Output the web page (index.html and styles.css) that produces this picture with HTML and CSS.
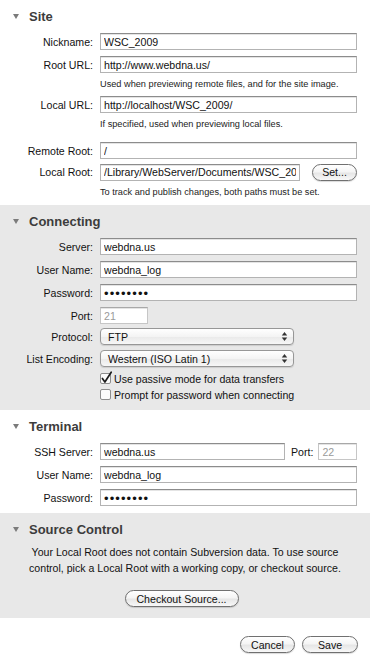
FILE: index.html
```html
<!DOCTYPE html>
<html lang="en">
<head>
    <meta charset="UTF-8">
    <meta name="viewport" content="width=device-width, initial-scale=1.0">
    <title>Site Settings</title>
    <link rel="stylesheet" href="styles.css">
</head>
<body>
    <div class="panel">
        <!-- Site -->
        <section class="group">
            <h2 class="group-title"><span class="disclosure"></span>Site</h2>
            <div class="row">
                <label for="nickname">Nickname:</label>
                <input type="text" class="field" id="nickname" value="WSC_2009">
            </div>
            <div class="row">
                <label for="rootUrl">Root URL:</label>
                <input type="text" class="field" id="rootUrl" value="http://www.webdna.us/">
            </div>
            <p class="hint">Used when previewing remote files, and for the site image.</p>
            <div class="row">
                <label for="localUrl">Local URL:</label>
                <input type="text" class="field" id="localUrl" value="http://localhost/WSC_2009/">
            </div>
            <p class="hint">If specified, used when previewing local files.</p>
            <div class="row spaced">
                <label for="remoteRoot">Remote Root:</label>
                <input type="text" class="field" id="remoteRoot" value="/">
            </div>
            <div class="row tight">
                <label for="localRoot">Local Root:</label>
                <input type="text" class="field local-root" id="localRoot" value="/Library/WebServer/Documents/WSC_2009/">
                <button type="button" class="btn set-btn">Set...</button>
            </div>
            <p class="hint">To track and publish changes, both paths must be set.</p>
        </section>

        <!-- Connecting -->
        <section class="group shaded">
            <h2 class="group-title"><span class="disclosure"></span>Connecting</h2>
            <div class="row">
                <label for="server">Server:</label>
                <input type="text" class="field" id="server" value="webdna.us">
            </div>
            <div class="row">
                <label for="userName">User Name:</label>
                <input type="text" class="field" id="userName" value="webdna_log">
            </div>
            <div class="row">
                <label for="password">Password:</label>
                <input type="text" class="field secret" id="password" value="••••••••">
            </div>
            <div class="row">
                <label for="port">Port:</label>
                <input type="text" class="field port" id="port" placeholder="21">
            </div>
            <div class="row popup-row">
                <label>Protocol:</label>
                <div class="popup">
                    <span>FTP</span>
                    <svg class="arrows" width="7" height="11" viewBox="0 0 7 11"><polygon points="3.5,1 6.2,4.4 0.8,4.4"/><polygon points="0.8,6.6 6.2,6.6 3.5,10"/></svg>
                </div>
            </div>
            <div class="row popup-row">
                <label>List Encoding:</label>
                <div class="popup">
                    <span>Western (ISO Latin 1)</span>
                    <svg class="arrows" width="7" height="11" viewBox="0 0 7 11"><polygon points="3.5,1 6.2,4.4 0.8,4.4"/><polygon points="0.8,6.6 6.2,6.6 3.5,10"/></svg>
                </div>
            </div>
            <div class="checks">
                <div class="check-row">
                    <svg class="checkbox" width="13" height="14" viewBox="0 0 13 14"><rect x="0.5" y="2.5" width="10" height="10" rx="1.5" fill="#fbfbfb" stroke="#8d8d8d"/><path d="M2.4 7.4 L4.9 11 L11.2 1.2" fill="none" stroke="#1c1c1c" stroke-width="1.7" stroke-linecap="round" stroke-linejoin="round"/></svg>
                    <span>Use passive mode for data transfers</span>
                </div>
                <div class="check-row">
                    <svg class="checkbox" width="13" height="14" viewBox="0 0 13 14"><rect x="0.5" y="2.5" width="10" height="10" rx="1.5" fill="#fbfbfb" stroke="#8d8d8d"/></svg>
                    <span>Prompt for password when connecting</span>
                </div>
            </div>
        </section>

        <!-- Terminal -->
        <section class="group">
            <h2 class="group-title"><span class="disclosure"></span>Terminal</h2>
            <div class="row">
                <label for="sshServer">SSH Server:</label>
                <input type="text" class="field ssh" id="sshServer" value="webdna.us">
                <span class="inline-label">Port:</span>
                <input type="text" class="field ssh-port" placeholder="22">
            </div>
            <div class="row">
                <label for="sshUser">User Name:</label>
                <input type="text" class="field" id="sshUser" value="webdna_log">
            </div>
            <div class="row">
                <label for="sshPassword">Password:</label>
                <input type="text" class="field secret" id="sshPassword" value="••••••••">
            </div>
        </section>

        <!-- Source Control -->
        <section class="group shaded source">
            <h2 class="group-title"><span class="disclosure"></span>Source Control</h2>
            <p class="notice">Your Local Root does not contain Subversion data. To use source<br>control, pick a Local Root with a working copy, or checkout source.</p>
            <div class="center">
                <button type="button" class="btn checkout-btn">Checkout Source...</button>
            </div>
        </section>

        <div class="footer">
            <button type="button" class="btn cancel-btn">Cancel</button>
            <button type="button" class="btn save-btn">Save</button>
        </div>
    </div>
</body>
</html>
```

FILE: styles.css
```css
body {
    font-family: "Liberation Sans", Arial, sans-serif;
    font-size: 10.6px;
    color: #111;
    margin: 0;
    background-color: #fff;
}
.panel {
    width: 370px;
    height: 666px;
    overflow: hidden;
}
.group {
    padding: 5px 13px 7px 0;
}
.shaded {
    background-color: #e8e8e8;
}
.group-title {
    display: flex;
    align-items: center;
    height: 22px;
    margin: 0;
    padding-left: 13px;
    font-size: 13px;
    font-weight: bold;
    color: #3c3c3c;
}
.disclosure {
    width: 0;
    height: 0;
    border-left: 3px solid transparent;
    border-right: 3px solid transparent;
    border-top: 5px solid #7b7b7b;
    margin-right: 10px;
}
.row {
    display: flex;
    align-items: center;
    height: 17px;
    margin-top: 6px;
}
.row.spaced {
    margin-top: 12px;
}
.row.tight {
    margin-top: 4px;
    height: 18px;
}
.row label {
    flex: 0 0 93px;
    text-align: right;
    margin-right: 7px;
    white-space: nowrap;
}
.field {
    flex: 1;
    min-width: 0;
    height: 17px;
    box-sizing: border-box;
    padding: 0 3px;
    border: 1px solid #b3b3b3;
    border-top-color: #8c8c8c;
    box-shadow: inset 0 1px 0 #e4e4e4;
    background-color: #fff;
    font-family: inherit;
    font-size: 10.6px;
    color: #111;
    outline: none;
}
.field::placeholder {
    color: #9a9a9a;
}
.secret {
    font-size: 13px;
    letter-spacing: 1.1px;
    padding-top: 1px;
}
.port {
    flex: 0 0 48px;
    border-color: #c6c6c6;
    border-top-color: #a8a8a8;
}
.local-root {
    flex: 0 0 200px;
}
.ssh {
    flex: 0 0 185px;
}
.inline-label {
    margin: 0 5px 0 6px;
}
.ssh-port {
    flex: 1;
    border-color: #c6c6c6;
    border-top-color: #a8a8a8;
}
.hint {
    margin: 5px 0 0 100px;
    line-height: 12px;
    font-size: 9.2px;
    color: #222;
}
.popup-row {
    margin-top: 5px;
}
.popup-row:nth-of-type(5) {
    margin-top: 4px;
}
.popup {
    flex: 0 0 194px;
    height: 17px;
    box-sizing: border-box;
    display: flex;
    align-items: center;
    justify-content: space-between;
    padding: 0 5px 0 7px;
    border: 1px solid #979797;
    border-radius: 4px;
    background: linear-gradient(to bottom, #ffffff 0%, #f4f4f4 50%, #e9e9e9 51%, #f7f7f7 100%);
    box-shadow: 0 1px 1px rgba(0, 0, 0, 0.12);
}
.arrows polygon {
    fill: #333;
}
.checks {
    margin: 4px 0 0 100px;
}
.check-row {
    display: flex;
    align-items: center;
    height: 16px;
}
.checkbox {
    margin-right: 1px;
    margin-top: -3px;
}
.btn {
    height: 17px;
    box-sizing: border-box;
    padding: 0;
    border: 1px solid #707070;
    border-radius: 9px;
    background: linear-gradient(to bottom, #ffffff 0%, #f5f5f5 45%, #e6e6e6 55%, #f8f8f8 100%);
    box-shadow: 0 1px 1px rgba(0, 0, 0, 0.15);
    font-family: inherit;
    font-size: 10.6px;
    color: #111;
    cursor: pointer;
}
.set-btn {
    width: 46px;
    margin-left: 12px;
}
.notice {
    margin: 4px 0 0 13px;
    line-height: 16px;
    text-align: center;
}
.center {
    display: flex;
    justify-content: center;
    margin-top: 14px;
    padding-left: 6px;
}
.source {
    padding-bottom: 11px;
}
.checkout-btn {
    width: 114px;
}
.footer {
    display: flex;
    justify-content: flex-end;
    gap: 7px;
    padding: 18px 12px 0 0;
}
.cancel-btn {
    width: 55px;
}
.save-btn {
    width: 56px;
}
```
